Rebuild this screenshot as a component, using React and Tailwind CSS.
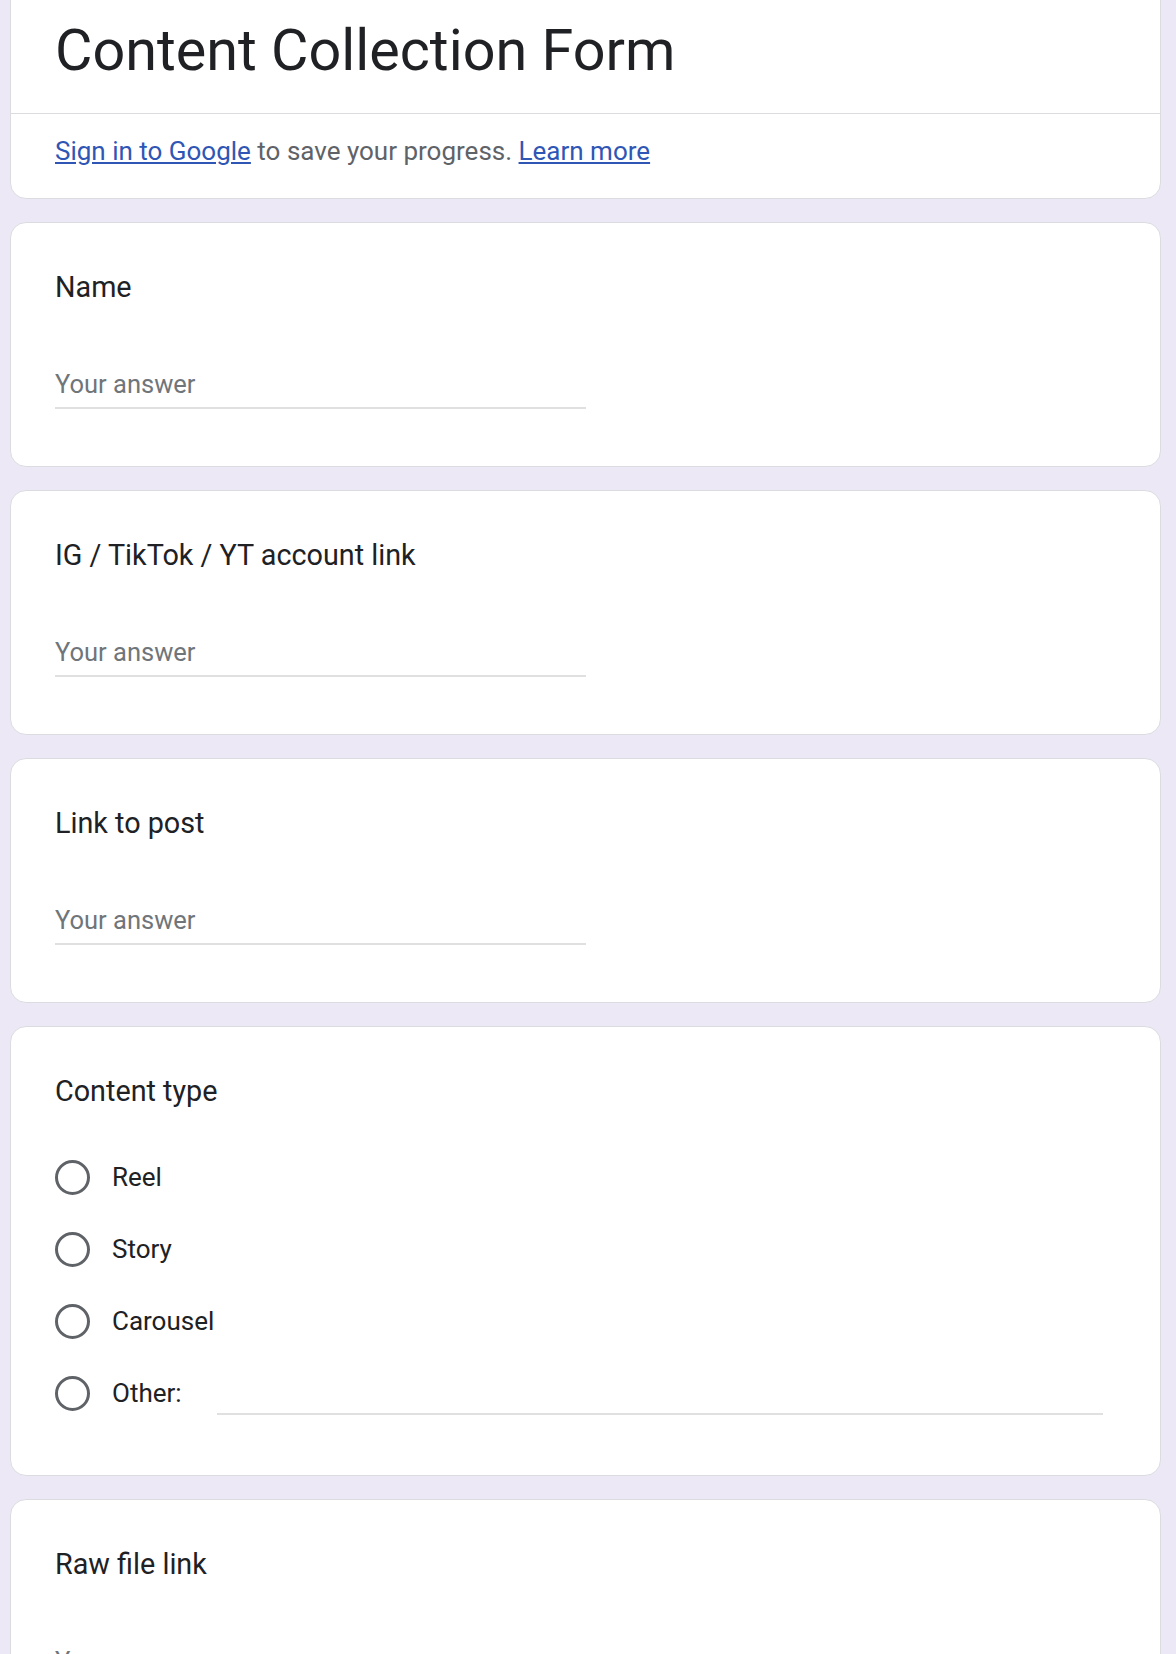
import React from "react";

function Card({ children, className = "" }) {
  return (
    <div className={"bg-white border border-[#dadce0] rounded-[16px] " + className}>
      {children}
    </div>
  );
}

function ShortAnswer({ label }) {
  return (
    <Card className="px-[44px] pt-[44px] pb-[57px]">
      <div className="text-[28.75px] leading-[40px] text-[#202124]">{label}</div>
      <div className="mt-[55px] w-1/2 h-[47px] flex items-center border-b-2 border-[#e0e0e0]">
        <span className="text-[25.5px] text-[#70757a]">Your answer</span>
      </div>
    </Card>
  );
}

function Radio({ label, other }) {
  return (
    <div className="h-[72px] flex items-center">
      <div className="w-[35px] h-[35px] rounded-full border-[3px] border-[#5f6368] shrink-0" />
      <span className="ml-[22px] text-[26px] text-[#202124]">{label}</span>
      {other && (
        <div className="flex-1 ml-[35px] mr-[13px] self-start mt-[56px] h-[2px] bg-[#e0e0e0]" />
      )}
    </div>
  );
}

export default function App() {
  return (
    <div className="min-h-[1654px] bg-[#ece8f6] pl-[10px] pr-[15px] font-['Roboto',sans-serif] overflow-hidden">
      <div className="flex flex-col gap-[23px]">
        <div className="bg-white border border-[#dadce0] rounded-[16px] -mt-[20px]">
          <div className="pt-[34px] pb-[26px] px-[44px]">
            <h1 className="text-[57.5px] leading-[72px] text-[#202124] font-normal">Content Collection Form</h1>
          </div>
          <div className="border-t border-[#dadce0] px-[44px] pt-[19px] pb-[29px]">
            <p className="text-[26px] leading-[36px] text-[#5f6368]">
              <a className="text-[#2f56b5] underline">Sign in to Google</a> to save your progress.{" "}
              <a className="text-[#2f56b5] underline">Learn more</a>
            </p>
          </div>
        </div>
        <ShortAnswer label="Name" />
        <ShortAnswer label="IG / TikTok / YT account link" />
        <ShortAnswer label="Link to post" />
        <Card className="px-[44px] pt-[44px] pb-[46px]">
          <div className="text-[28.75px] leading-[40px] text-[#202124]">Content type</div>
          <div className="mt-[30px] flex flex-col">
            <Radio label="Reel" />
            <Radio label="Story" />
            <Radio label="Carousel" />
            <Radio label="Other:" other />
          </div>
        </Card>
        <ShortAnswer label="Raw file link" />
      </div>
    </div>
  );
}
